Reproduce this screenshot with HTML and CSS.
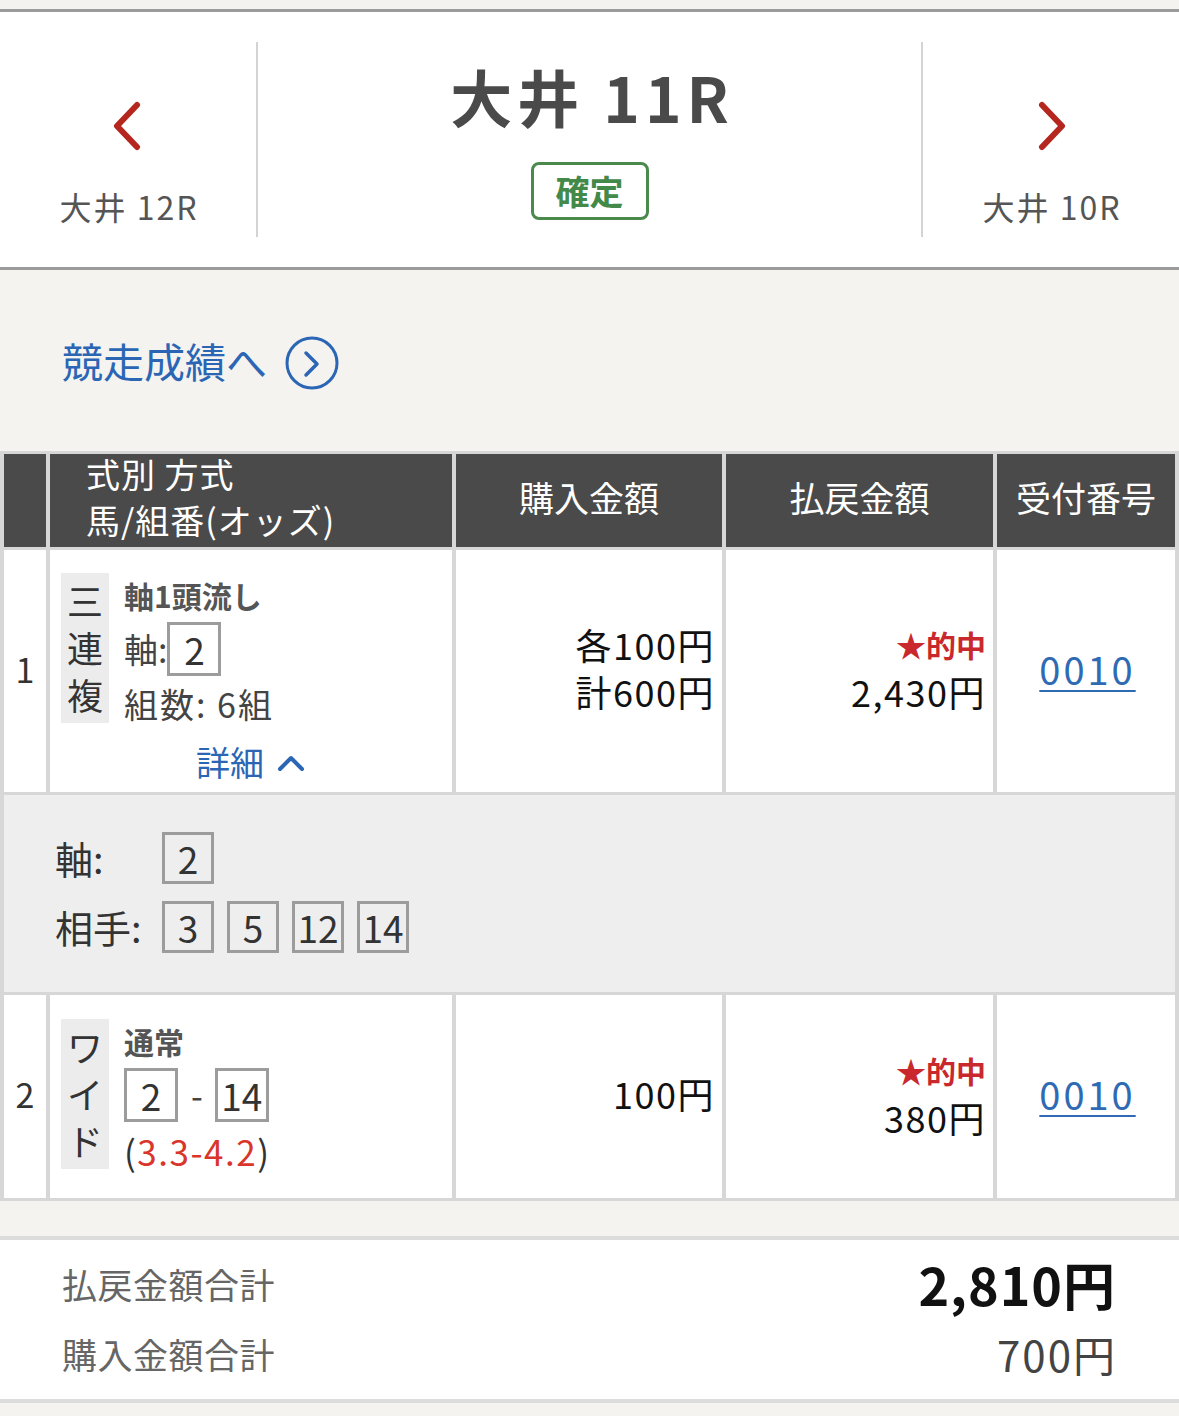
FILE: index.html
```html
<!DOCTYPE html>
<html lang="ja">
<head>
<meta charset="utf-8">
<title>大井 11R</title>
<link rel="stylesheet" href="styles.css">
</head>
<body>
<header class="race-nav">
  <a class="nav-side">
    <svg class="nav-chev" width="30" height="50" viewBox="0 0 30 50"><polyline points="24,4 4,25 24,46" fill="none" stroke="#b5261e" stroke-width="6" stroke-linecap="round" stroke-linejoin="round"/></svg>
    <span class="nav-label">大井 12R</span>
  </a>
  <div class="nav-divider"></div>
  <div class="nav-center">
    <h1 class="race-title">大井 11R</h1>
    <span class="status-badge">確定</span>
  </div>
  <div class="nav-divider"></div>
  <a class="nav-side">
    <svg class="nav-chev" width="30" height="50" viewBox="0 0 30 50"><polyline points="6,4 26,25 6,46" fill="none" stroke="#b5261e" stroke-width="6" stroke-linecap="round" stroke-linejoin="round"/></svg>
    <span class="nav-label">大井 10R</span>
  </a>
</header>

<section class="result-link-area">
  <a class="result-link">競走成績へ
    <svg class="circle-arrow" width="54" height="54" viewBox="0 0 54 54"><circle cx="27" cy="27" r="25" fill="none" stroke="#2b66b5" stroke-width="3"/><polyline points="21,17 32,28 21,39" fill="none" stroke="#2b66b5" stroke-width="3.5" stroke-linecap="round" stroke-linejoin="round"/></svg>
  </a>
</section>

<table class="bets">
  <colgroup>
    <col class="c-no"><col class="c-bet"><col class="c-buy"><col class="c-pay"><col class="c-rcpt">
  </colgroup>
  <thead>
    <tr class="head-row">
      <th></th>
      <th class="th-bet"><div class="th-bet-text">式別 方式<br>馬/組番(オッズ)</div></th>
      <th>購入金額</th>
      <th>払戻金額</th>
      <th>受付番号</th>
    </tr>
  </thead>
  <tbody>
    <tr class="row-1">
      <td class="no-cell">1</td>
      <td class="bet-cell">
        <div class="bet-body">
          <div class="bet-type"><span>三</span><span>連</span><span>複</span></div>
          <div class="bet-info">
            <div class="bet-method">軸1頭流し</div>
            <div class="bet-line boxes">軸:<span class="num-box">2</span></div>
            <div class="bet-line count">組数: 6組</div>
          </div>
        </div>
        <div class="detail-toggle">詳細<svg class="up-chev" width="30" height="18" viewBox="0 0 30 18"><polyline points="4,15 15,4 26,15" fill="none" stroke="#2b66b5" stroke-width="4" stroke-linecap="round" stroke-linejoin="round"/></svg></div>
      </td>
      <td class="amt-cell"><div>各100円</div><div>計600円</div></td>
      <td class="amt-cell"><div class="hit">★的中</div><div>2,430円</div></td>
      <td class="rcpt-cell"><a class="rcpt">0010</a></td>
    </tr>
    <tr class="row-detail">
      <td colspan="5" class="detail-cell">
        <div class="detail-grid">
          <span class="detail-label">軸:</span>
          <div class="box-list"><span class="num-box small">2</span></div>
          <span class="detail-label">相手:</span>
          <div class="box-list"><span class="num-box small">3</span><span class="num-box small">5</span><span class="num-box small">12</span><span class="num-box small">14</span></div>
        </div>
      </td>
    </tr>
    <tr class="row-2">
      <td class="no-cell">2</td>
      <td class="bet-cell second">
        <div class="bet-body">
          <div class="bet-type"><span>ワ</span><span>イ</span><span>ド</span></div>
          <div class="bet-info">
            <div class="bet-method">通常</div>
            <div class="bet-line boxes"><span class="num-box">2</span><span class="sep">-</span><span class="num-box">14</span></div>
            <div class="bet-line odds">(<span class="odds-val">3.3-4.2</span>)</div>
          </div>
        </div>
      </td>
      <td class="amt-cell"><div>100円</div></td>
      <td class="amt-cell"><div class="hit">★的中</div><div>380円</div></td>
      <td class="rcpt-cell"><a class="rcpt">0010</a></td>
    </tr>
  </tbody>
</table>

<section class="summary">
  <div class="sum-row"><span class="sum-label">払戻金額合計</span><span class="sum-value total">2,810円</span></div>
  <div class="sum-row"><span class="sum-label">購入金額合計</span><span class="sum-value">700円</span></div>
</section>
</body>
</html>
```

FILE: styles.css
```css
html, body {
  margin: 0;
  padding: 0;
}
body {
  background: #f4f3f0;
  font-family: "Noto Sans CJK JP", "Noto Sans", sans-serif;
  color: #333;
  width: 1179px;
  min-height: 1416px;
}

/* ---------- race navigation ---------- */
.race-nav {
  margin-top: 9px;
  height: 255px;
  background: #fff;
  border-top: 3px solid #9b9b9b;
  border-bottom: 3px solid #9b9b9b;
  display: flex;
  align-items: center;
}
.nav-side {
  width: 256px;
  align-self: stretch;
  display: flex;
  flex-direction: column;
  align-items: center;
  padding-top: 89px;
  box-sizing: border-box;
  text-decoration: none;
}
.nav-chev {
  display: block;
}
.nav-label {
  margin-top: 35px;
  font-size: 32px;
  line-height: 40px;
  letter-spacing: 2px;
  padding-left: 2px;
  color: #555;
}
.nav-divider {
  width: 2px;
  height: 195px;
  background: #d4d4d4;
}
.nav-center {
  flex: 1;
  align-self: stretch;
  display: flex;
  flex-direction: column;
  align-items: center;
  padding-top: 49px;
  box-sizing: border-box;
}
.race-title {
  margin: 0;
  font-size: 62px;
  line-height: 70px;
  font-weight: 700;
  color: #4a4a4a;
  letter-spacing: 5px;
  padding-left: 5px;
}
.status-badge {
  margin-top: 31px;
  height: 58px;
  box-sizing: border-box;
  padding: 0 22px;
  border: 3px solid #4a8a4c;
  border-radius: 8px;
  color: #43894a;
  font-size: 34px;
  font-weight: 700;
  line-height: 51px;
}

/* ---------- result link ---------- */
.result-link-area {
  height: 181px;
  padding: 60px 0 0 62px;
  box-sizing: border-box;
}
.result-link {
  display: inline-flex;
  align-items: center;
  font-size: 41px;
  line-height: 56px;
  color: #2b66b5;
  text-decoration: none;
}
.circle-arrow {
  margin-left: 18px;
  margin-top: 6px;
}

/* ---------- bets table ---------- */
.bets {
  width: 1179px;
  table-layout: fixed;
  border-collapse: separate;
  border-spacing: 4px 3px;
  background: #d7d7d7;
}
.c-no { width: 42px; }
.c-bet { width: 402px; }
.c-buy { width: 266px; }
.c-pay { width: 267px; }
.c-rcpt { width: 178px; }

.head-row {
  height: 93px;
}
.head-row th {
  background: #4a4a4a;
  color: #fff;
  font-weight: 400;
  font-size: 35px;
  line-height: 46px;
  padding: 0 0 8px;
  text-align: center;
  vertical-align: middle;
}
.head-row .th-bet {
  text-align: left;
  vertical-align: top;
  padding: 0 0 0 36px;
  font-size: 34px;
  letter-spacing: 1px;
}
.th-bet-text {
  margin-top: -3px;
  height: 92px;
  margin-bottom: -6px;
}

.bets td {
  background: #fff;
  padding: 0;
  vertical-align: middle;
}
.row-1 { height: 242px; }
.row-detail { height: 197px; }
.row-2 { height: 203px; }

.no-cell {
  text-align: center;
  font-size: 34px;
  color: #333;
  padding-bottom: 6px !important;
}

.bet-cell {
  vertical-align: top !important;
  padding: 23px 0 9px !important;
}
.bet-cell.second {
  padding-top: 24px !important;
}
.bet-body {
  display: flex;
  align-items: flex-start;
}
.bet-type {
  width: 48px;
  margin-left: 11px;
  padding: 4px 0 5px;
  background: #ececec;
  display: flex;
  flex-direction: column;
  align-items: center;
  font-size: 36px;
  line-height: 47px;
  color: #333;
}
.bet-info {
  margin-left: 15px;
  display: flex;
  flex-direction: column;
  align-items: flex-start;
}
.bet-method {
  font-size: 30px;
  font-weight: 700;
  line-height: 44px;
  color: #555;
}
.bet-line {
  font-size: 34px;
  line-height: 44px;
  color: #444;
}
.bet-line.boxes {
  display: flex;
  align-items: center;
  height: 54px;
  margin-top: 5px;
}
.bet-line.count {
  margin-top: 6px;
  letter-spacing: 2px;
}
.bet-line.odds {
  margin-top: 7px;
  color: #333;
  font-size: 35px;
  letter-spacing: 1.5px;
}
.odds-val {
  color: #d9352b;
}
.sep {
  margin: 0 12px 0 13px;
  font-size: 34px;
}
.num-box {
  display: inline-flex;
  align-items: center;
  justify-content: center;
  width: 54px;
  height: 54px;
  box-sizing: border-box;
  border: 3px solid #9c9c9c;
  font-size: 37px;
  line-height: 1;
  color: #333;
}
.num-box.small {
  width: 52px;
  height: 52px;
  font-size: 37px;
}
.detail-toggle {
  margin-top: 16px;
  display: flex;
  justify-content: center;
  align-items: center;
  font-size: 34px;
  line-height: 40px;
  color: #2b66b5;
}
.up-chev {
  margin-left: 12px;
  margin-top: 2px;
}

.amt-cell {
  text-align: right;
  padding-right: 7px !important;
  padding-bottom: 6px !important;
  font-size: 36px;
  line-height: 47px;
  color: #111;
  letter-spacing: 1.5px;
}
.hit {
  color: #c9282d;
  font-weight: 700;
  font-size: 30px;
  letter-spacing: 0;
}
.rcpt-cell {
  text-align: center;
  padding-bottom: 6px !important;
}
.rcpt {
  font-size: 38px;
  color: #2f6bb4;
  letter-spacing: 3px;
  padding-left: 3px;
  text-decoration: underline;
  text-decoration-thickness: 2px;
  text-underline-offset: 5px;
}

.detail-cell {
  background: #eeeeee !important;
  vertical-align: top !important;
  padding: 37px 0 0 51px !important;
}
.detail-grid {
  display: grid;
  grid-template-columns: 107px auto;
  row-gap: 17px;
  align-items: center;
}
.detail-label {
  font-size: 38px;
  line-height: 52px;
  color: #333;
}
.box-list {
  display: flex;
  gap: 13px;
}

/* ---------- summary ---------- */
.summary {
  margin-top: 35px;
  background: #fff;
  border-top: 4px solid #dcdcdc;
  border-bottom: 4px solid #dcdcdc;
  padding: 8px 64px 11px 62px;
}
.sum-row {
  display: flex;
  justify-content: space-between;
  align-items: center;
  height: 70px;
}
.sum-label {
  font-size: 35px;
  color: #666;
  letter-spacing: 0.5px;
}
.sum-value {
  font-size: 42px;
  color: #444;
  letter-spacing: 2px;
  margin-right: -2px;
}
.sum-value.total {
  font-size: 52px;
  font-weight: 700;
  color: #111;
  letter-spacing: 1px;
  margin-right: -1px;
}
```
